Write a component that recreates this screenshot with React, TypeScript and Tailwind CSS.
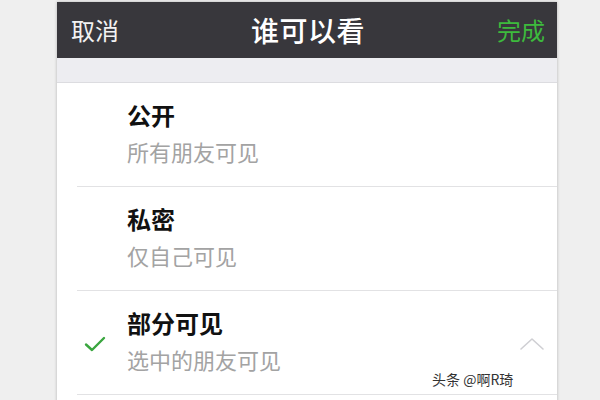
import React from 'react';

const font = { fontFamily: '"Noto Sans CJK SC", "Noto Sans", sans-serif' };

type Option = { title: string; desc: string; checked?: boolean; chevron?: boolean };

const options: Option[] = [
    { title: '公开', desc: '所有朋友可见' },
    { title: '私密', desc: '仅自己可见' },
    { title: '部分可见', desc: '选中的朋友可见', checked: true, chevron: true },
];

const CheckIcon = () => (
    <svg width="22" height="16" viewBox="0 0 22 16" fill="none">
        <path d="M2 8.5 L8 14 L20 2" stroke="#3aa63f" strokeWidth="2.4" strokeLinecap="round" strokeLinejoin="round" />
    </svg>
);

const ChevronUp = () => (
    <svg width="26" height="14" viewBox="0 0 26 14" fill="none">
        <path d="M2 12 L13 2 L24 12" stroke="#cfcfd3" strokeWidth="1.6" strokeLinecap="round" strokeLinejoin="round" />
    </svg>
);

const App: React.FC = () => {
    return (
        <div className="relative w-[600px] h-[400px] overflow-hidden bg-[#efefef] pt-[2px] pl-[57px]" style={font}>
            <div className="w-[500px] h-[420px] bg-white flex flex-col shadow-[0_0_3px_rgba(0,0,0,0.25)]">
                {/* Nav bar */}
                <div className="h-[56px] bg-[#38373c] grid grid-cols-[1fr_auto_1fr] items-center pl-[14px] pr-[12px]">
                    <span className="text-[24px] text-[#f2f2f2] leading-none">取消</span>
                    <span className="text-[28px] text-white font-medium leading-none tracking-[0.5px]">谁可以看</span>
                    <span className="text-[24px] text-[#3dba3d] leading-none justify-self-end">完成</span>
                </div>

                {/* Spacer band */}
                <div className="h-[25px] bg-[#ededf1] border-b border-[#dcdce0]" />

                {/* Options */}
                {options.map(opt => (
                    <div key={opt.title} className="relative h-[104px] flex items-center">
                        <div className="w-[70px] flex justify-center pl-[6px] pt-[2px]">
                            {opt.checked && <CheckIcon />}
                        </div>
                        <div className="flex-1 flex flex-col gap-[6px] mb-[5px]">
                            <span className="text-[24px] leading-[30px] font-semibold text-[#111]">{opt.title}</span>
                            <span className="text-[22px] leading-[30px] text-[#a3a3a3]">{opt.desc}</span>
                        </div>
                        {opt.chevron && (
                            <div className="pr-[12px] pt-[2px]">
                                <ChevronUp />
                            </div>
                        )}
                        <div className="absolute left-[20px] right-0 bottom-0 h-px bg-[#e2e2e4]" />
                    </div>
                ))}
            </div>

            {/* Watermark */}
            <span
                className="absolute left-[432px] top-[372px] text-[14px] text-[#333] leading-none [text-shadow:0_0_2px_#fff,0_0_2px_#fff]"
            >
                头条 @啊R琦
            </span>
        </div>
    );
};

export default App;
